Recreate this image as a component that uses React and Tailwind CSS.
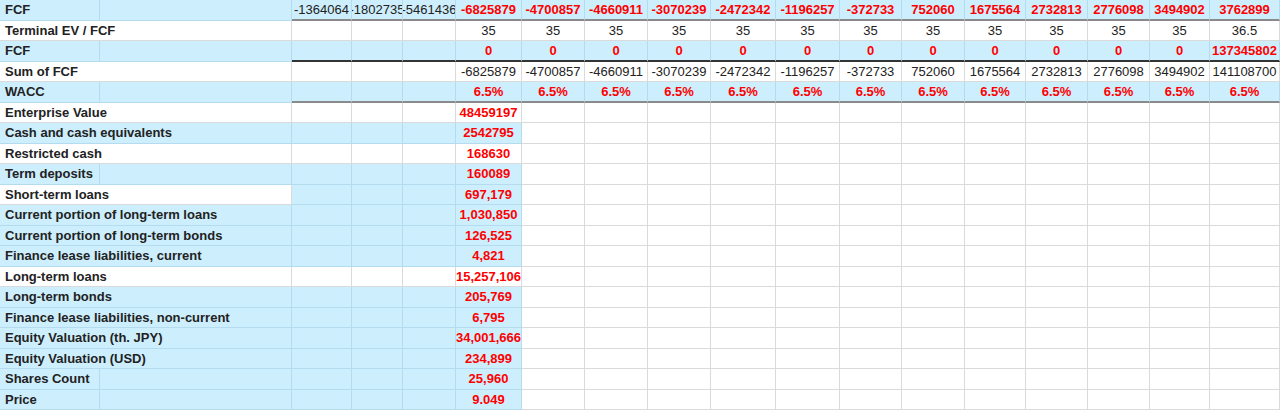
const W = [100,192,60,51,53,66,63,63,63,65,64,62,63,61,62,62,60,70];
const cols = "grid-cols-[100px_192px_60px_51px_53px_66px_63px_63px_63px_65px_64px_62px_63px_61px_62px_62px_60px_70px]";

const top = [
  { label: "FCF", bg: "all", split: true, border: "gray",
    vals: [["-1364064","n"],["-1802735","n"],["-5461436","n"],...["-6825879","-4700857","-4660911","-3070239","-2472342","-1196257","-372733","752060","1675564","2732813","2776098","3494902","3762899"].map(v=>[v,"r"])] },
  { label: "Terminal EV / FCF", bg: "none", vals: [["",""],["",""],["",""],...Array(12).fill(["35","n"]),["36.5","n"]] },
  { label: "FCF", bg: "all", split: true, border: "dark", vals: [["",""],["",""],["",""],...Array(12).fill(["0","r"]),["137345802","r"]] },
  { label: "Sum of FCF", bg: "none", vals: [["",""],["",""],["",""],...["-6825879","-4700857","-4660911","-3070239","-2472342","-1196257","-372733","752060","1675564","2732813","2776098","3494902","141108700"].map(v=>[v,"n"])] },
  { label: "WACC", bg: "all", split: true, border: "gray", vals: [["",""],["",""],["",""],...Array(13).fill(["6.5%","r"])] },
];
const bottom = [
  ["Enterprise Value","48459197","none"],
  ["Cash and cash equivalents","2542795","blue"],
  ["Restricted cash","168630","none"],
  ["Term deposits","160089","blue",true],
  ["Short-term loans","697,179","short"],
  ["Current portion of long-term loans","1,030,850","blue"],
  ["Current portion of long-term bonds","126,525","blue"],
  ["Finance lease liabilities, current","4,821","blue"],
  ["Long-term loans","15,257,106","none"],
  ["Long-term bonds","205,769","blue"],
  ["Finance lease liabilities, non-current","6,795","blue"],
  ["Equity Valuation (th. JPY)","34,001,666","blue"],
  ["Equity Valuation (USD)","234,899","blue"],
  ["Shares Count","25,960","blue",true],
  ["Price","9.049","blue",true],
];

function Cell({ blue, children, cls = "", noLeft }) {
  return (
    <div className={`h-[20.5px] flex items-center overflow-hidden whitespace-nowrap border-b ${noLeft ? "" : "border-r"} ${blue ? "bg-[#cdeefd] border-[#b5dcee]" : "bg-white border-[#dadada]"} ${cls}`}>
      {children}
    </div>
  );
}

export default function App() {
  return (
    <div className="w-[1280px] h-[410px] overflow-hidden bg-white text-[13px] text-[#222]" style={{ fontFamily: '"Liberation Sans", Arial, sans-serif' }}>
      <div className={`grid ${cols}`}>
        {top.map((r, i) => {
          const blue = r.bg === "all";
          const bb = r.border === "dark" ? "border-b-2 border-b-[#333]" : r.border === "gray" ? "border-b-2 border-b-[#8a8a8a]" : "";
          return [
            <Cell key={i+"a"} blue={blue} noLeft={!r.split} cls="pl-[5px] font-bold overflow-visible z-10">{r.label}</Cell>,
            <Cell key={i+"b"} blue={blue} />,
            ...r.vals.map(([v, t], j) => (
              <Cell key={i+"v"+j} blue={blue} cls={`justify-center ${bb} ${t === "r" ? "text-[#ff0000] font-bold" : ""}`}>
                <span className="shrink-0">{v}</span>
              </Cell>
            )),
          ];
        })}
        {bottom.map(([label, val, mode, split], i) => {
          const lb = mode === "blue";
          const db = mode === "blue" || mode === "short";
          return [
            <Cell key={"l"+i} blue={lb} noLeft={!split} cls="pl-[5px] font-bold overflow-visible z-10">{label}</Cell>,
            <Cell key={"m"+i} blue={lb} />,
            <Cell key={"c2"+i} blue={db} />,
            <Cell key={"c3"+i} blue={db} />,
            <Cell key={"c4"+i} blue={db} />,
            <Cell key={"c5"+i} blue={db} cls="justify-center font-bold text-[#ff0000]">{val}</Cell>,
            ...Array(12).fill(0).map((_, j) => <Cell key={"e"+i+"_"+j} blue={false} />),
          ];
        })}
      </div>
    </div>
  );
}
